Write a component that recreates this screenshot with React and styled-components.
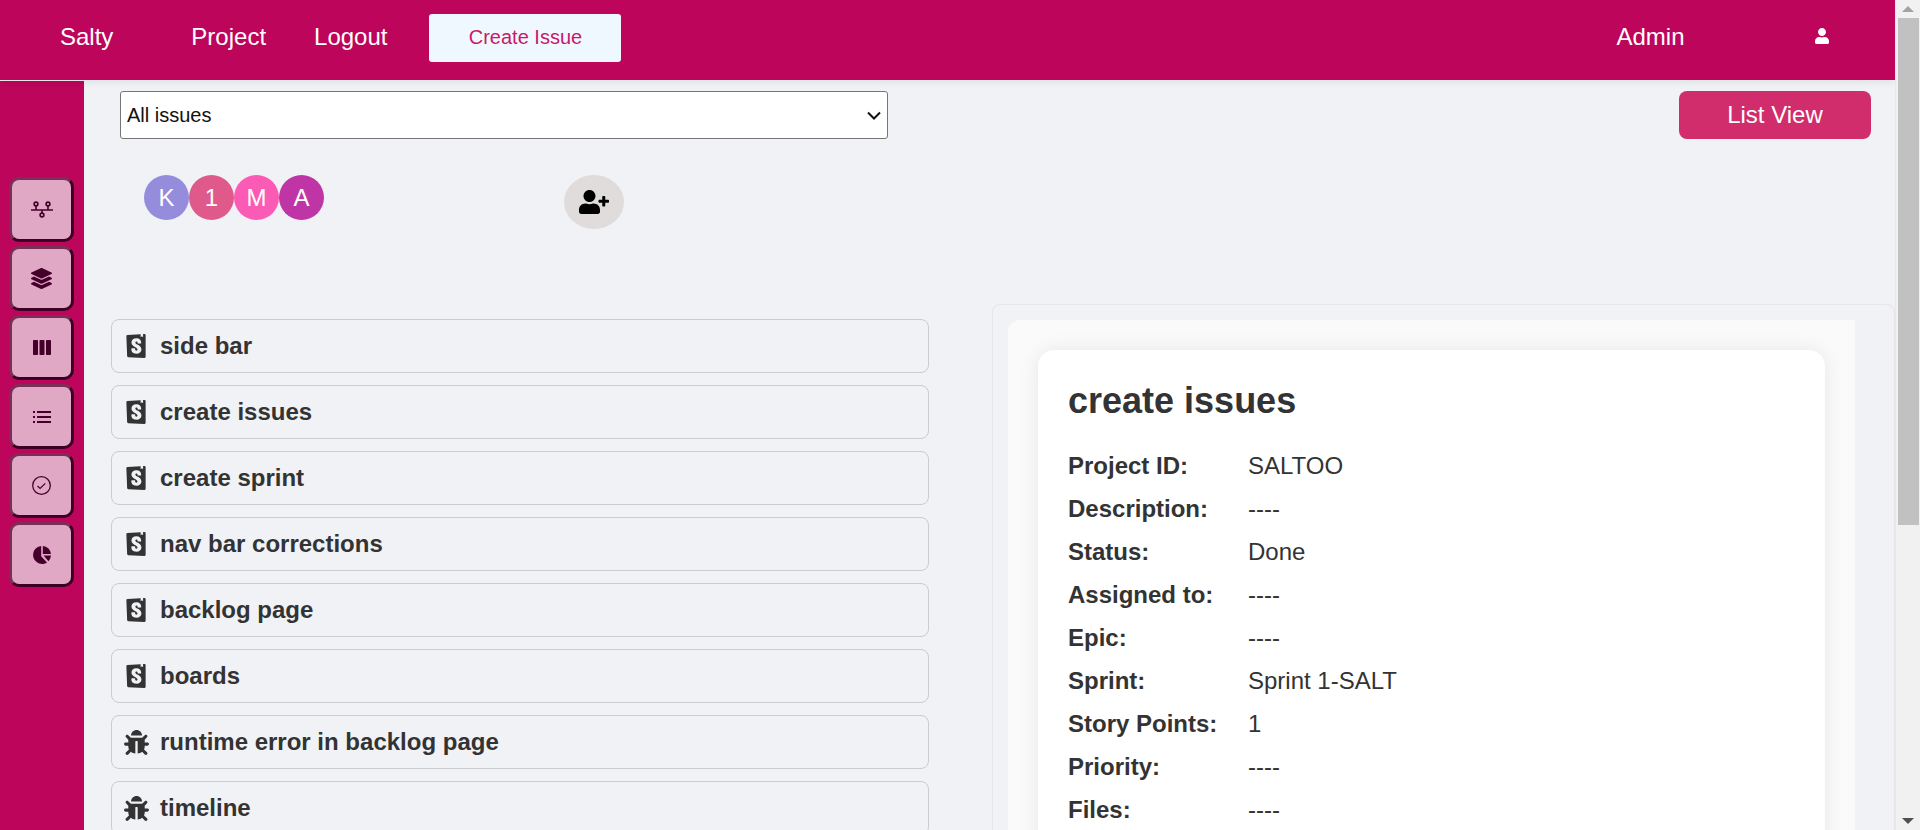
import React from "react";
import styled, { createGlobalStyle } from "styled-components";
import { FaBug, FaLayerGroup, FaUser, FaUserPlus } from "react-icons/fa";
import { SiStorybook } from "react-icons/si";

const GlobalStyle = createGlobalStyle`
  html, body {
    margin: 0;
    height: 100%;
    overflow: hidden;
    background: #f0f2f6;
    font-family: "Liberation Sans", Arial, sans-serif;
    color: #333;
  }
  * {
    box-sizing: border-box;
  }
`;

const Screen = styled.div`
  display: flex;
  height: 830px;
`;

const Page = styled.div`
  width: 1895px;
  height: 830px;
  overflow: hidden;
  flex-shrink: 0;
`;

const Navbar = styled.nav`
  position: relative;
  z-index: 2;
  height: 80px;
  background: #bd055b;
  box-shadow: 0 2px 8px rgba(0, 0, 0, 0.08);
  display: flex;
  align-items: center;
  color: #fff;
  font-size: 24px;
`;

const NavLink = styled.span`
  margin-left: ${(p) => p.$left}px;
  margin-top: -6px;
`;

const CreateButton = styled.button`
  margin-left: 42px;
  margin-top: -4px;
  width: 192px;
  height: 48px;
  padding: 0 0 2px;
  background: aliceblue;
  border: none;
  border-radius: 3px;
  color: #c8186a;
  font-family: inherit;
  font-size: 20px;
`;

const UserIcon = styled.span`
  margin-left: 129px;
  margin-top: -8px;
  display: flex;
  font-size: 16px;
`;

const Body = styled.div`
  display: flex;
  height: 750px;
`;

const Sidebar = styled.aside`
  width: 84px;
  flex-shrink: 0;
  margin-top: 1px;
  padding: 96px 0 0 9px;
  background: #bd055b;
  display: flex;
  flex-direction: column;
  gap: 4px;
`;

const SideButton = styled.button`
  width: 65px;
  height: 65px;
  padding: 0;
  background: #e0a8c5;
  border: 3px solid;
  border-color: #7a2f57 #3d0024 #3d0024 #7a2f57;
  border-radius: 10px;
  color: #44002a;
  font-size: 21px;
  display: flex;
  align-items: center;
  justify-content: center;
`;

const Content = styled.main`
  flex: 1;
  min-width: 0;
`;

const Toolbar = styled.div`
  display: flex;
  justify-content: space-between;
  padding: 11px 24px 0 36px;
`;

const SelectWrap = styled.div`
  position: relative;
  width: 768px;
  height: 48px;
`;

const IssueSelect = styled.select`
  width: 100%;
  height: 100%;
  padding-left: 6px;
  background: #fff;
  border: 1px solid #767676;
  border-radius: 3px;
  color: #111;
  font-family: inherit;
  font-size: 20px;
  appearance: none;
`;

const SelectChevron = styled.svg`
  position: absolute;
  top: 20px;
  right: 7px;
  pointer-events: none;
`;

const ListViewButton = styled.button`
  width: 192px;
  height: 48px;
  background: #d12c6b;
  border: none;
  border-radius: 8px;
  color: #fff;
  font-family: inherit;
  font-size: 24px;
`;

const TeamRow = styled.div`
  display: flex;
  height: 54px;
  margin: 36px 0 75px 60px;
`;

const Avatar = styled.div`
  width: 45px;
  height: 45px;
  padding-top: 1px;
  border-radius: 50%;
  background: ${(p) => p.$color};
  color: #fff;
  font-size: 24px;
  display: flex;
  align-items: center;
  justify-content: center;
`;

const AddMember = styled.button`
  width: 60px;
  height: 54px;
  margin-left: 240px;
  padding: 0;
  background: #dfdcdb;
  border: none;
  border-radius: 50%;
  color: #000;
  font-size: 30px;
  display: flex;
  align-items: center;
  justify-content: center;
`;

const Columns = styled.div`
  display: flex;
  align-items: flex-start;
`;

const IssueList = styled.div`
  width: 818px;
  margin: 15px 0 0 27px;
  flex-shrink: 0;
  display: flex;
  flex-direction: column;
  gap: 12px;
`;

const IssueRow = styled.div`
  height: 54px;
  padding-left: 12px;
  border: 1px solid #ccc;
  border-radius: 8px;
  display: flex;
  align-items: center;
  gap: ${(p) => (p.$bug ? 11 : 12)}px;
  font-size: 24px;
  font-weight: 700;
`;

const IssueIcon = styled.span`
  display: flex;
  font-size: ${(p) => (p.$bug ? 25 : 24)}px;
`;

const DetailOuter = styled.section`
  width: 903px;
  margin-left: 63px;
  padding: 15px 39px 0 15px;
  border: 1px solid #e6e6ea;
  border-bottom: none;
  border-radius: 8px 8px 0 0;
  flex-shrink: 0;
`;

const DetailInner = styled.div`
  padding: 30px 30px 40px;
  background: #fafafa;
  border-radius: 12px 0 0 0;
`;

const DetailCard = styled.div`
  padding: 30px;
  background: #fff;
  border-radius: 16px;
  box-shadow: 0 0 20px rgba(0, 0, 0, 0.08);
`;

const DetailTitle = styled.h2`
  margin: 0 0 23px;
  font-size: 36px;
  line-height: 41px;
`;

const DetailRow = styled.div`
  display: flex;
  height: 43px;
  align-items: center;
  font-size: 24px;
`;

const DetailLabel = styled.strong`
  width: 180px;
`;

const ScrollTrack = styled.div`
  width: 25px;
  height: 830px;
  background: #f1f1f1;
  border-left: 1px solid #e8e8e8;
  display: flex;
  flex-direction: column;
  align-items: center;
`;

const ScrollArrow = styled.div`
  width: 0;
  height: 0;
  margin: 6px 0;
  border-left: 6px solid transparent;
  border-right: 6px solid transparent;
  ${(p) =>
    p.$down ? "border-top: 6px solid #505050;" : "border-bottom: 6px solid #a3a3a3;"}
`;

const ScrollThumb = styled.div`
  width: 21px;
  height: 507px;
  margin-bottom: auto;
  background: #c1c1c1;
`;

const ProjectIcon = () => (
  <svg width="22" height="17" viewBox="0 0 22 17" fill="none" stroke="currentColor" strokeWidth="1.6">
    <circle cx="5" cy="3" r="1.9" />
    <circle cx="17" cy="3" r="1.9" />
    <circle cx="11" cy="14" r="1.9" />
    <path d="M0 9h22M5 5v4M17 5v4M11 9v3" />
  </svg>
);

const BoardIcon = () => (
  <svg width="18" height="15" viewBox="0 0 18 15" fill="currentColor">
    <rect x="0" y="0" width="5" height="15" rx="0.8" />
    <rect x="6.5" y="0" width="5" height="15" rx="0.8" />
    <rect x="13" y="0" width="5" height="15" rx="0.8" />
  </svg>
);

const ListIcon = () => (
  <svg width="18" height="12" viewBox="0 0 18 12" fill="currentColor">
    <rect x="0" y="0" width="2" height="2" />
    <rect x="0" y="5" width="2" height="2" />
    <rect x="0" y="10" width="2" height="2" />
    <rect x="4" y="0" width="14" height="2" />
    <rect x="4" y="5" width="14" height="2" />
    <rect x="4" y="10" width="14" height="2" />
  </svg>
);

const CheckIcon = () => (
  <svg width="19" height="19" viewBox="0 0 19 19" fill="none" stroke="currentColor" strokeWidth="1.3">
    <circle cx="9.5" cy="9.5" r="8.8" />
    <path d="M5.5 10l2.6 2.4 5.2-5" />
  </svg>
);

const PieIcon = () => (
  <svg width="18" height="18" viewBox="0 0 18 18" fill="currentColor">
    <path d="M8.2 0A9 9 0 1 0 14 16.5L8.2 10.2Z" />
    <path d="M9.8 0A8.6 8.6 0 0 1 18 8H9.8Z" />
    <path d="M18 9.6A9 9 0 0 1 15.4 15.2L10.6 9.6Z" />
  </svg>
);

const sideIcons = [
  <ProjectIcon key="project" />,
  <FaLayerGroup key="layers" />,
  <BoardIcon key="board" />,
  <ListIcon key="list" />,
  <CheckIcon key="check" />,
  <PieIcon key="pie" />,
];

const members = [
  { letter: "K", color: "#968cdc" },
  { letter: "1", color: "#e0598b" },
  { letter: "M", color: "#fb5ab5" },
  { letter: "A", color: "#c035a5" },
];

const issues = [
  { title: "side bar" },
  { title: "create issues" },
  { title: "create sprint" },
  { title: "nav bar corrections" },
  { title: "backlog page" },
  { title: "boards" },
  { title: "runtime error in backlog page", bug: true },
  { title: "timeline", bug: true },
];

const details = [
  ["Project ID:", "SALTOO"],
  ["Description:", "----"],
  ["Status:", "Done"],
  ["Assigned to:", "----"],
  ["Epic:", "----"],
  ["Sprint:", "Sprint 1-SALT"],
  ["Story Points:", "1"],
  ["Priority:", "----"],
  ["Files:", "----"],
];

export default function App() {
  return (
    <>
      <GlobalStyle />
      <Screen>
        <Page>
          <Navbar>
            <NavLink $left={60}>Salty</NavLink>
            <NavLink $left={78}>Project</NavLink>
            <NavLink $left={48}>Logout</NavLink>
            <CreateButton>Create Issue</CreateButton>
            <NavLink $left={995}>Admin</NavLink>
            <UserIcon>
              <FaUser />
            </UserIcon>
          </Navbar>
          <Body>
            <Sidebar>
              {sideIcons.map((icon) => (
                <SideButton key={icon.key}>{icon}</SideButton>
              ))}
            </Sidebar>
            <Content>
              <Toolbar>
                <SelectWrap>
                  <IssueSelect defaultValue="all">
                    <option value="all">All issues</option>
                  </IssueSelect>
                  <SelectChevron width="14" height="9" viewBox="0 0 14 9" fill="none" stroke="#111" strokeWidth="2">
                    <path d="M1 1.5l6 6 6-6" />
                  </SelectChevron>
                </SelectWrap>
                <ListViewButton>List View</ListViewButton>
              </Toolbar>
              <TeamRow>
                {members.map((m) => (
                  <Avatar key={m.letter} $color={m.color}>
                    {m.letter}
                  </Avatar>
                ))}
                <AddMember>
                  <FaUserPlus />
                </AddMember>
              </TeamRow>
              <Columns>
                <IssueList>
                  {issues.map((issue) => (
                    <IssueRow key={issue.title} $bug={issue.bug}>
                      <IssueIcon $bug={issue.bug}>
                        {issue.bug ? <FaBug /> : <SiStorybook />}
                      </IssueIcon>
                      {issue.title}
                    </IssueRow>
                  ))}
                </IssueList>
                <DetailOuter>
                  <DetailInner>
                    <DetailCard>
                      <DetailTitle>create issues</DetailTitle>
                      {details.map(([label, value]) => (
                        <DetailRow key={label}>
                          <DetailLabel>{label}</DetailLabel>
                          <span>{value}</span>
                        </DetailRow>
                      ))}
                    </DetailCard>
                  </DetailInner>
                </DetailOuter>
              </Columns>
            </Content>
          </Body>
        </Page>
        <ScrollTrack>
          <ScrollArrow />
          <ScrollThumb />
          <ScrollArrow $down />
        </ScrollTrack>
      </Screen>
    </>
  );
}
